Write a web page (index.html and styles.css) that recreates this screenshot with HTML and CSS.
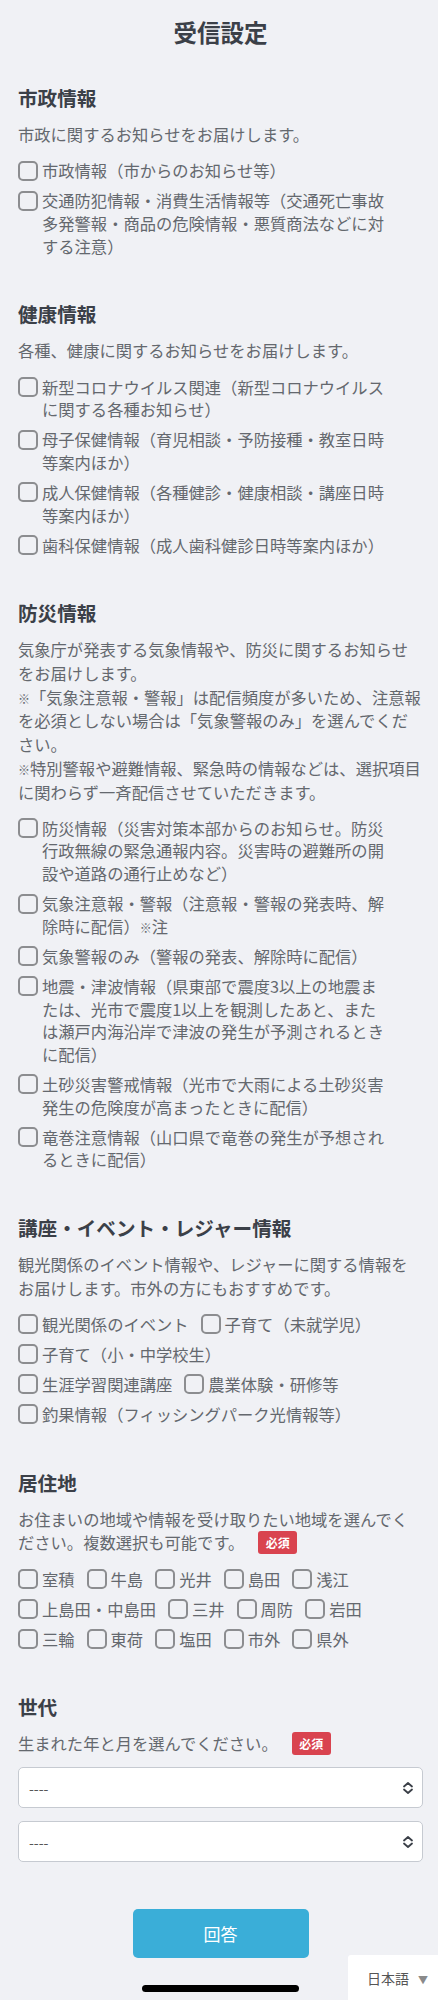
FILE: index.html
```html
<!DOCTYPE html>
<html lang="ja">
<head>
    <meta charset="utf-8">
    <title>受信設定</title>
    <link rel="stylesheet" href="styles.css">
</head>
<body>
    <main class="page">
        <h1 class="page-title">受信設定</h1>

        <section class="section">
            <h2 class="section-title">市政情報</h2>
            <p class="section-desc">市政に関するお知らせをお届けします。</p>
            <div class="checks">
                <label class="check"><input type="checkbox"><span>市政情報（市からのお知らせ等）</span></label>
                <label class="check"><input type="checkbox"><span>交通防犯情報・消費生活情報等（交通死亡事故多発警報・商品の危険情報・悪質商法などに対する注意）</span></label>
            </div>
        </section>

        <section class="section">
            <h2 class="section-title">健康情報</h2>
            <p class="section-desc">各種、健康に関するお知らせをお届けします。</p>
            <div class="checks">
                <label class="check"><input type="checkbox"><span>新型コロナウイルス関連（新型コロナウイルスに関する各種お知らせ）</span></label>
                <label class="check"><input type="checkbox"><span>母子保健情報（育児相談・予防接種・教室日時等案内ほか）</span></label>
                <label class="check"><input type="checkbox"><span>成人保健情報（各種健診・健康相談・講座日時等案内ほか）</span></label>
                <label class="check"><input type="checkbox"><span>歯科保健情報（成人歯科健診日時等案内ほか）</span></label>
            </div>
        </section>

        <section class="section">
            <h2 class="section-title">防災情報</h2>
            <p class="section-desc">気象庁が発表する気象情報や、防災に関するお知らせをお届けします。<br><span class="kome">※</span>「気象注意報・警報」は配信頻度が多いため、注意報を必須としない場合は「気象警報のみ」を選んでください。<br><span class="kome">※</span>特別警報や避難情報、緊急時の情報などは、選択項目に関わらず一斉配信させていただきます。</p>
            <div class="checks">
                <label class="check"><input type="checkbox"><span>防災情報（災害対策本部からのお知らせ。防災行政無線の緊急通報内容。災害時の避難所の開設や道路の通行止めなど）</span></label>
                <label class="check"><input type="checkbox"><span>気象注意報・警報（注意報・警報の発表時、解除時に配信）<span class="kome">※</span>注</span></label>
                <label class="check"><input type="checkbox"><span>気象警報のみ（警報の発表、解除時に配信）</span></label>
                <label class="check"><input type="checkbox"><span>地震・津波情報（県東部で震度3以上の地震または、光市で震度1以上を観測したあと、または瀬戸内海沿岸で津波の発生が予測されるときに配信）</span></label>
                <label class="check"><input type="checkbox"><span>土砂災害警戒情報（光市で大雨による土砂災害発生の危険度が高まったときに配信）</span></label>
                <label class="check"><input type="checkbox"><span>竜巻注意情報（山口県で竜巻の発生が予想されるときに配信）</span></label>
            </div>
        </section>

        <section class="section">
            <h2 class="section-title">講座・イベント・レジャー情報</h2>
            <p class="section-desc">観光関係のイベント情報や、レジャーに関する情報をお届けします。市外の方にもおすすめです。</p>
            <div class="checks">
                <label class="check"><input type="checkbox"><span>観光関係のイベント</span></label>
                <label class="check"><input type="checkbox"><span>子育て（未就学児）</span></label>
                <label class="check"><input type="checkbox"><span>子育て（小・中学校生）</span></label>
                <label class="check"><input type="checkbox"><span>生涯学習関連講座</span></label>
                <label class="check"><input type="checkbox"><span>農業体験・研修等</span></label>
                <label class="check"><input type="checkbox"><span>釣果情報（フィッシングパーク光情報等）</span></label>
            </div>
        </section>

        <section class="section">
            <h2 class="section-title">居住地</h2>
            <p class="section-desc">お住まいの地域や情報を受け取りたい地域を選んでください。複数選択も可能です。<span class="badge">必須</span></p>
            <div class="checks">
                <label class="check"><input type="checkbox"><span>室積</span></label>
                <label class="check"><input type="checkbox"><span>牛島</span></label>
                <label class="check"><input type="checkbox"><span>光井</span></label>
                <label class="check"><input type="checkbox"><span>島田</span></label>
                <label class="check"><input type="checkbox"><span>浅江</span></label>
                <label class="check"><input type="checkbox"><span>上島田・中島田</span></label>
                <label class="check"><input type="checkbox"><span>三井</span></label>
                <label class="check"><input type="checkbox"><span>周防</span></label>
                <label class="check"><input type="checkbox"><span>岩田</span></label>
                <label class="check"><input type="checkbox"><span>三輪</span></label>
                <label class="check"><input type="checkbox"><span>東荷</span></label>
                <label class="check"><input type="checkbox"><span>塩田</span></label>
                <label class="check"><input type="checkbox"><span>市外</span></label>
                <label class="check"><input type="checkbox"><span>県外</span></label>
            </div>
        </section>

        <section class="section">
            <h2 class="section-title">世代</h2>
            <p class="section-desc">生まれた年と月を選んでください。<span class="badge">必須</span></p>
            <div class="selects">
                <div class="select-box">
                    <select><option>----</option></select>
                    <svg class="select-arrow" width="12" height="14" viewBox="0 0 12 14"><path d="M2 5.5 L6 2 L10 5.5 M2 8.5 L6 12 L10 8.5" fill="none" stroke="#3a3f47" stroke-width="1.8" stroke-linecap="round" stroke-linejoin="round"/></svg>
                </div>
                <div class="select-box">
                    <select><option>----</option></select>
                    <svg class="select-arrow" width="12" height="14" viewBox="0 0 12 14"><path d="M2 5.5 L6 2 L10 5.5 M2 8.5 L6 12 L10 8.5" fill="none" stroke="#3a3f47" stroke-width="1.8" stroke-linecap="round" stroke-linejoin="round"/></svg>
                </div>
            </div>
        </section>

        <div class="actions">
            <button class="submit">回答</button>
        </div>
    </main>

    <div class="lang">日本語<span class="lang-arrow">▼</span></div>
    <div class="home-bar"></div>
</body>
</html>
```

FILE: styles.css
```css
body {
    margin: 0;
    padding: 0;
    min-height: 2000px;
    background-color: #f0f1f5;
    font-family: "Noto Sans CJK JP", "Noto Sans", sans-serif;
    color: #64686e;
}
.page {
    padding: 18px 15px 0 18px;
}
.page-title {
    margin: 0;
    font-size: 23.5px;
    line-height: 28px;
    font-weight: bold;
    text-align: center;
    color: #3b4048;
}
.section {
    margin-top: 45px;
}
.section:first-of-type {
    margin-top: 40px;
}
.section-title {
    margin: 0;
    font-size: 19.6px;
    line-height: 24px;
    font-weight: bold;
    color: #3b4048;
}
.section-desc {
    margin: 13px 0 0;
    font-size: 16.3px;
    line-height: 23.7px;
}
.kome {
    font-size: 12px;
    line-height: 1;
    font-weight: bold;
}
.badge {
    margin-left: 14px;
    padding: 3px 7.5px;
    font-size: 12px;
    line-height: 1;
    font-weight: bold;
    color: #fff;
    background-color: #d9434f;
    border-radius: 3px;
    vertical-align: 1px;
}
.checks {
    display: flex;
    flex-wrap: wrap;
    row-gap: 7.3px;
    margin-top: 12.5px;
    padding-right: 25px;
}
.check {
    display: flex;
    align-items: flex-start;
    margin-right: 12px;
    font-size: 16.3px;
    line-height: 22.7px;
}
.check input {
    -webkit-appearance: none;
    appearance: none;
    flex: none;
    width: 20px;
    height: 20px;
    margin: 1.5px 4px 0 0;
    border: 2px solid #8c8d90;
    border-radius: 5px;
    background: transparent;
}
.selects {
    display: flex;
    flex-direction: column;
    gap: 13px;
    margin-top: 11px;
}
.select-box {
    position: relative;
}
.select-box select {
    -webkit-appearance: none;
    appearance: none;
    display: block;
    width: 100%;
    height: 41px;
    padding: 0 10px;
    font-family: inherit;
    font-size: 14px;
    color: #555;
    background-color: #fff;
    border: 1px solid #c6cad1;
    border-radius: 5px;
}
.select-arrow {
    position: absolute;
    right: 9px;
    top: 14px;
}
.actions {
    display: flex;
    justify-content: center;
    margin-top: 47px;
}
.submit {
    width: 176px;
    height: 49px;
    font-family: inherit;
    font-size: 17px;
    color: #fff;
    background-color: #3aaed8;
    border: none;
    border-radius: 5px;
}
.lang {
    position: fixed;
    right: 0;
    bottom: 0;
    width: 90px;
    height: 45px;
    box-sizing: border-box;
    padding: 14px 0 0 19px;
    font-size: 14px;
    line-height: 18px;
    color: #555;
    background-color: #fff;
    border-top-left-radius: 3px;
}
.lang-arrow {
    margin-left: 9px;
    font-size: 10px;
    color: #8a8a8a;
}
.home-bar {
    position: fixed;
    bottom: 8px;
    left: 142px;
    width: 157px;
    height: 7px;
    background-color: #000;
    border-radius: 4px;
}
```
